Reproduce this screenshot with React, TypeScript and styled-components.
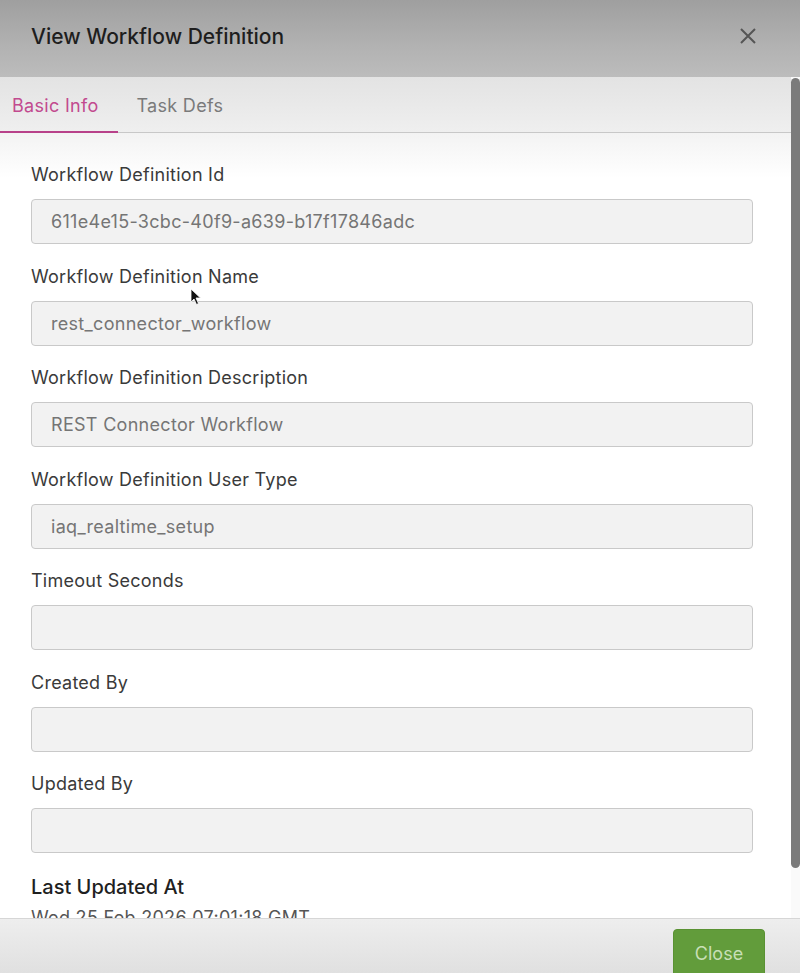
import { FC } from 'react'
import styled, { createGlobalStyle } from 'styled-components'

const GlobalStyle = createGlobalStyle`
  html, body {
    margin: 0;
    padding: 0;
    height: 100%;
    overflow: hidden;
  }
  body {
    font-family: Inter, "Liberation Sans", sans-serif;
    background: #fff;
  }
  * {
    box-sizing: border-box;
  }
`

const Modal = styled.div`
  position: relative;
  display: flex;
  flex-direction: column;
  height: 973px;
  width: 800px;
`

const Header = styled.div`
  flex: 0 0 77px;
  display: flex;
  align-items: center;
  justify-content: space-between;
  padding: 0 43px 5px 31px;
  background: linear-gradient(180deg, #9f9f9f 0%, #b2b2b2 60%, #bcbcbc 100%);
`

const Title = styled.h1`
  margin: 0;
  font-size: 21px;
  font-weight: 500;
  color: #1e1e1e;
  letter-spacing: 0px;
`

const CloseIcon = styled.button`
  display: flex;
  padding: 0;
  border: 0;
  background: none;
  color: #555;
  cursor: pointer;
`

const Main = styled.div`
  flex: 1;
  display: flex;
  min-height: 0;
`

const Content = styled.div`
  flex: 1;
  min-width: 0;
  overflow: hidden;
`

const ScrollTrack = styled.div`
  flex: 0 0 9px;
  padding-top: 1px;
  background: #fafafa;
`

const ScrollThumb = styled.div<{ $size: number }>`
  height: ${p => p.$size}px;
  background: #7b7b7b;
  border-radius: 5px;
`

const Tabs = styled.div`
  display: flex;
  height: 56px;
  border-bottom: 1px solid #c8c8c8;
  background: linear-gradient(180deg, #e3e3e3 0%, #efefef 100%);
`

const Tab = styled.div<{ $active?: boolean }>`
  display: flex;
  align-items: center;
  padding: 2px 19px 0 12px;
  font-size: 18px;
  letter-spacing: 0.3px;
  color: ${p => (p.$active ? '#c24a8f' : '#7a7a7a')};
  border-bottom: 2px solid ${p => (p.$active ? '#b8418a' : 'transparent')};
  margin-bottom: -1px;
  margin-right: ${p => (p.$active ? '0' : '0')};
  & + & {
    padding-left: 19px;
  }
`

const Body = styled.div`
  display: flex;
  flex-direction: column;
  padding: 31px 38px 60px 31px;
  background: linear-gradient(180deg, #f3f3f3 0px, #ffffff 45px);
`

const Field = styled.div`
  display: flex;
  flex-direction: column;
  gap: 13px;
  margin-bottom: 21.5px;
`

const Label = styled.label`
  font-size: 18px;
  letter-spacing: 0.25px;
  line-height: 22px;
  color: #3a3a3a;
`

const Input = styled.div`
  height: 45px;
  display: flex;
  align-items: center;
  padding: 0 19px;
  border: 1px solid #c9c9c9;
  border-radius: 4px;
  background: #f2f2f2;
  font-size: 18px;
  letter-spacing: 0.3px;
  color: #757575;
`

const Heading = styled.div`
  font-size: 20px;
  line-height: 24px;
  font-weight: 500;
  color: #1f1f1f;
`

const DateText = styled.div`
  margin-top: 8px;
  font-size: 18px;
  line-height: 22px;
  letter-spacing: 0.3px;
  color: #555;
`

const Footer = styled.div`
  flex: 0 0 55px;
  height: 55px;
  overflow: hidden;
  display: flex;
  justify-content: flex-end;
  align-items: flex-start;
  padding: 10px 35px 0 0;
  border-top: 1px solid #d6d6d6;
  background: linear-gradient(180deg, #eeeeee 0%, #e0e0e0 100%);
`

const CloseButton = styled.button`
  flex: 0 0 auto;
  width: 92px;
  height: 48px;
  border: 1px solid #5a9233;
  border-radius: 4px;
  background: #629c3b;
  color: #c8dfb6;
  font-family: Inter, "Liberation Sans", sans-serif;
  font-size: 18px;
`

const Pointer = styled.svg`
  position: absolute;
  left: 190px;
  top: 288px;
`

const fields: [string, string][] = [
  ['Workflow Definition Id', '611e4e15-3cbc-40f9-a639-b17f17846adc'],
  ['Workflow Definition Name', 'rest_connector_workflow'],
  ['Workflow Definition Description', 'REST Connector Workflow'],
  ['Workflow Definition User Type', 'iaq_realtime_setup'],
  ['Timeout Seconds', ''],
  ['Created By', ''],
  ['Updated By', ''],
]

const X: FC = () => (
  <svg width='18' height='18' viewBox='0 0 18 18' fill='none' stroke='currentColor' strokeWidth='2'>
    <path d='M2 2 L16 16 M16 2 L2 16' />
  </svg>
)

function App() {
  return (
    <>
      <GlobalStyle />
      <Modal>
        <Header>
          <Title>View Workflow Definition</Title>
          <CloseIcon aria-label='close'>
            <X />
          </CloseIcon>
        </Header>
        <Main>
          <Content>
            <Tabs>
              <Tab $active>Basic Info</Tab>
              <Tab>Task Defs</Tab>
            </Tabs>
            <Body>
              {fields.map(([label, value]) => (
                <Field key={label}>
                  <Label>{label}</Label>
                  <Input>{value}</Input>
                </Field>
              ))}
              <Heading>Last Updated At</Heading>
              <DateText>Wed 25 Feb 2026 07:01:18 GMT</DateText>
            </Body>
          </Content>
          <ScrollTrack>
            <ScrollThumb $size={790} />
          </ScrollTrack>
        </Main>
        <Footer>
          <CloseButton>Close</CloseButton>
        </Footer>
        <Pointer width='12' height='18' viewBox='0 0 12 18'>
          <path d='M1 1 L1 14 L4 11 L6.5 16.5 L8.5 15.5 L6 10 L10.5 10 Z' fill='#111' stroke='#fff' strokeWidth='0.8' />
        </Pointer>
      </Modal>
    </>
  )
}

export default App
